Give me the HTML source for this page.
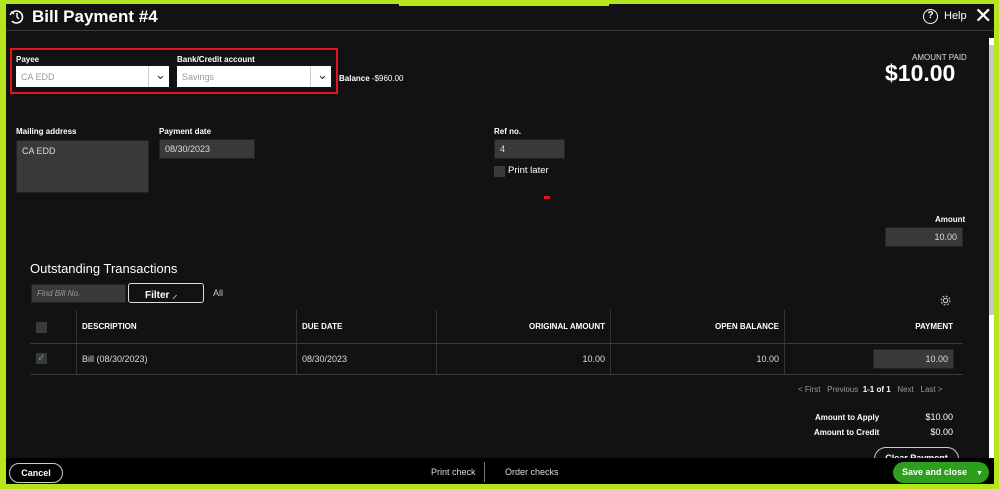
<!DOCTYPE html>
<html><head><style>
*{margin:0;padding:0;box-sizing:border-box}
body{width:999px;height:489px;background:#121214;font-family:"Liberation Sans",sans-serif;color:#fff;overflow:hidden;position:relative}
.a{position:absolute}
.g{position:absolute;background:#b5e61d;z-index:5}
.lbl{font-size:8px;font-weight:bold;color:#fff}
.inp{background:#38393b;border:1px solid #222;font-size:9px;color:#ddd;padding:0 5px}
.th{font-size:8px;font-weight:bold;top:322px}
.td{font-size:9px;color:#ddd;top:354px}
.vl{width:1px;background:#333}
</style></head><body>
<div class="g" style="left:0;top:0;width:6px;height:489px"></div>
<div class="g" style="left:994px;top:0;width:5px;height:489px"></div>
<div class="g" style="left:0;top:484px;width:999px;height:5px"></div>
<div class="g" style="left:0;top:0;width:999px;height:4px"></div>
<div class="g" style="left:399px;top:0;width:210px;height:6px"></div>

<div class="a" style="left:6px;top:4px;width:988px;height:27px;border-bottom:1px solid #3a3a3a"></div>
<svg class="a" style="left:9px;top:9px" width="16" height="16" viewBox="0 0 16 16"><path d="M3 4 A6 6 0 1 1 3 12" stroke="#fff" stroke-width="1.6" fill="none"/><path d="M1 6 L3 3 L5 5" stroke="#fff" stroke-width="1.4" fill="none"/><path d="M8 4 V8 L10 10" stroke="#fff" stroke-width="1.4" fill="none"/></svg>
<div class="a" style="left:32px;top:7px;font-size:17px;font-weight:bold">Bill Payment #4</div>
<div class="a" style="left:923px;top:9px;width:15px;height:15px;border:1.5px solid #fff;border-radius:50%;font-size:10px;font-weight:bold;text-align:center;line-height:12px">?</div>
<div class="a" style="left:944px;top:10px;font-size:11px">Help</div>
<div class="a" style="left:974px;top:3px;font-size:22px;font-weight:300">✕</div>

<div class="a" style="left:10px;top:48px;width:328px;height:46px;border:2px solid #e3141b"></div>
<div class="a lbl" style="left:16px;top:55px">Payee</div>
<div class="a lbl" style="left:177px;top:55px">Bank/Credit account</div>
<div class="a" style="left:16px;top:66px;width:153px;height:21px;background:#fff;color:#999;font-size:9px;padding:6px 5px">CA EDD<span class="a" style="left:132px;top:0;width:1px;height:21px;background:#ccc"></span><span class="a" style="left:139px;top:1px;color:#333;font-size:13px">⌄</span></div>
<div class="a" style="left:177px;top:66px;width:154px;height:21px;background:#fff;color:#999;font-size:9px;padding:6px 5px">Savings<span class="a" style="left:133px;top:0;width:1px;height:21px;background:#ccc"></span><span class="a" style="left:140px;top:1px;color:#333;font-size:13px">⌄</span></div>
<div class="a" style="left:339px;top:74px;font-size:8px"><b>Balance</b> -$960.00</div>

<div class="a" style="left:912px;top:53px;font-size:8px;color:#ddd">AMOUNT PAID</div>
<div class="a" style="left:885px;top:60px;font-size:23px;font-weight:bold">$10.00</div>

<div class="a lbl" style="left:16px;top:127px">Mailing address</div>
<div class="a inp" style="left:16px;top:140px;width:133px;height:53px;padding-top:5px">CA EDD</div>
<div class="a lbl" style="left:159px;top:127px">Payment date</div>
<div class="a inp" style="left:159px;top:139px;width:96px;height:20px;line-height:18px">08/30/2023</div>
<div class="a lbl" style="left:494px;top:127px">Ref no.</div>
<div class="a inp" style="left:494px;top:139px;width:71px;height:20px;line-height:18px">4</div>
<div class="a" style="left:494px;top:166px;width:11px;height:11px;background:#3a3a3c"></div>
<div class="a" style="left:508px;top:165px;font-size:9.5px">Print later</div>
<div class="a" style="left:544px;top:196px;width:6px;height:3px;background:#e3141b"></div>

<div class="a lbl" style="left:935px;top:215px">Amount</div>
<div class="a inp" style="left:885px;top:227px;width:78px;height:20px;line-height:18px;text-align:right">10.00</div>

<div class="a" style="left:30px;top:261px;font-size:13px">Outstanding Transactions</div>
<div class="a inp" style="left:31px;top:284px;width:95px;height:19px;line-height:17px;font-style:italic;color:#999;font-size:8px">Find Bill No.</div>
<div class="a" style="left:128px;top:283px;width:76px;height:20px;border:1.5px solid #ddd;border-radius:3px;font-size:10px;font-weight:bold;padding:3px 0 0 16px">Filter <span style="color:#6cf">⸝</span></div>
<div class="a" style="left:213px;top:288px;font-size:9px;color:#ccc">All</div>
<svg class="a" style="left:939px;top:294px" width="13" height="13" viewBox="0 0 14 14"><circle cx="7" cy="7" r="2.3" fill="none" stroke="#ccc" stroke-width="1.2"/><circle cx="7" cy="7" r="4.7" fill="none" stroke="#ccc" stroke-width="1.2" stroke-dasharray="2 1.7"/></svg>

<div class="a vl" style="left:76px;top:310px;height:64px"></div>
<div class="a vl" style="left:296px;top:310px;height:64px"></div>
<div class="a vl" style="left:436px;top:310px;height:64px"></div>
<div class="a vl" style="left:610px;top:310px;height:64px"></div>
<div class="a vl" style="left:784px;top:310px;height:64px"></div>
<div class="a" style="left:30px;top:343px;width:933px;height:1px;background:#3a3a3a"></div>
<div class="a" style="left:30px;top:374px;width:933px;height:1px;background:#3a3a3a"></div>
<div class="a" style="left:36px;top:322px;width:11px;height:11px;background:#3a3a3c"></div>
<div class="a" style="left:36px;top:353px;width:11px;height:11px;background:#3a3a3c;color:#3c3;font-size:10px;line-height:11px;text-align:center">✓</div>
<div class="a th" style="left:82px">DESCRIPTION</div>
<div class="a th" style="left:302px">DUE DATE</div>
<div class="a th" style="left:506px;width:99px;text-align:right">ORIGINAL AMOUNT</div>
<div class="a th" style="left:680px;width:99px;text-align:right">OPEN BALANCE</div>
<div class="a th" style="left:854px;width:99px;text-align:right">PAYMENT</div>
<div class="a td" style="left:82px">Bill (08/30/2023)</div>
<div class="a td" style="left:302px">08/30/2023</div>
<div class="a td" style="left:506px;width:99px;text-align:right">10.00</div>
<div class="a td" style="left:680px;width:99px;text-align:right">10.00</div>
<div class="a inp" style="left:873px;top:349px;width:81px;height:20px;line-height:18px;text-align:right">10.00</div>

<div class="a" style="left:798px;top:385px;font-size:8px;color:#999">&lt; First &nbsp; Previous &nbsp;<b style="color:#fff">1-1 of 1</b> &nbsp; Next &nbsp; Last &gt;</div>
<div class="a lbl" style="left:815px;top:413px">Amount to Apply</div>
<div class="a" style="left:901px;top:412px;width:52px;text-align:right;font-size:9px">$10.00</div>
<div class="a lbl" style="left:814px;top:428px">Amount to Credit</div>
<div class="a" style="left:901px;top:427px;width:52px;text-align:right;font-size:9px">$0.00</div>
<div class="a" style="left:874px;top:447px;width:85px;height:24px;border:1px solid #ccc;border-radius:12px;font-size:9px;font-weight:bold;text-align:center;padding-top:5px">Clear Payment</div>

<div class="a" style="left:989px;top:38px;width:5px;height:420px;background:#fff"><div style="margin-top:7px;height:270px;background:#c8c8c8"></div></div>

<div class="a" style="left:6px;top:458px;width:988px;height:26px;background:#000"></div>
<div class="a" style="left:9px;top:463px;width:54px;height:20px;border:1px solid #ccc;border-radius:10px;font-size:9px;font-weight:bold;text-align:center;line-height:18px">Cancel</div>
<div class="a" style="left:431px;top:467px;font-size:9px;color:#ddd">Print check</div>
<div class="a" style="left:484px;top:462px;width:1px;height:20px;background:#777"></div>
<div class="a" style="left:505px;top:467px;font-size:9px;color:#ddd">Order checks</div>
<div class="a" style="left:893px;top:462px;width:96px;height:21px;background:#2ca01c;border-radius:11px;font-size:9px;font-weight:bold;padding:5px 0 0 9px;white-space:nowrap;z-index:6">Save and close<span style="font-size:7px;margin-left:9px">▼</span></div>
</body></html>
